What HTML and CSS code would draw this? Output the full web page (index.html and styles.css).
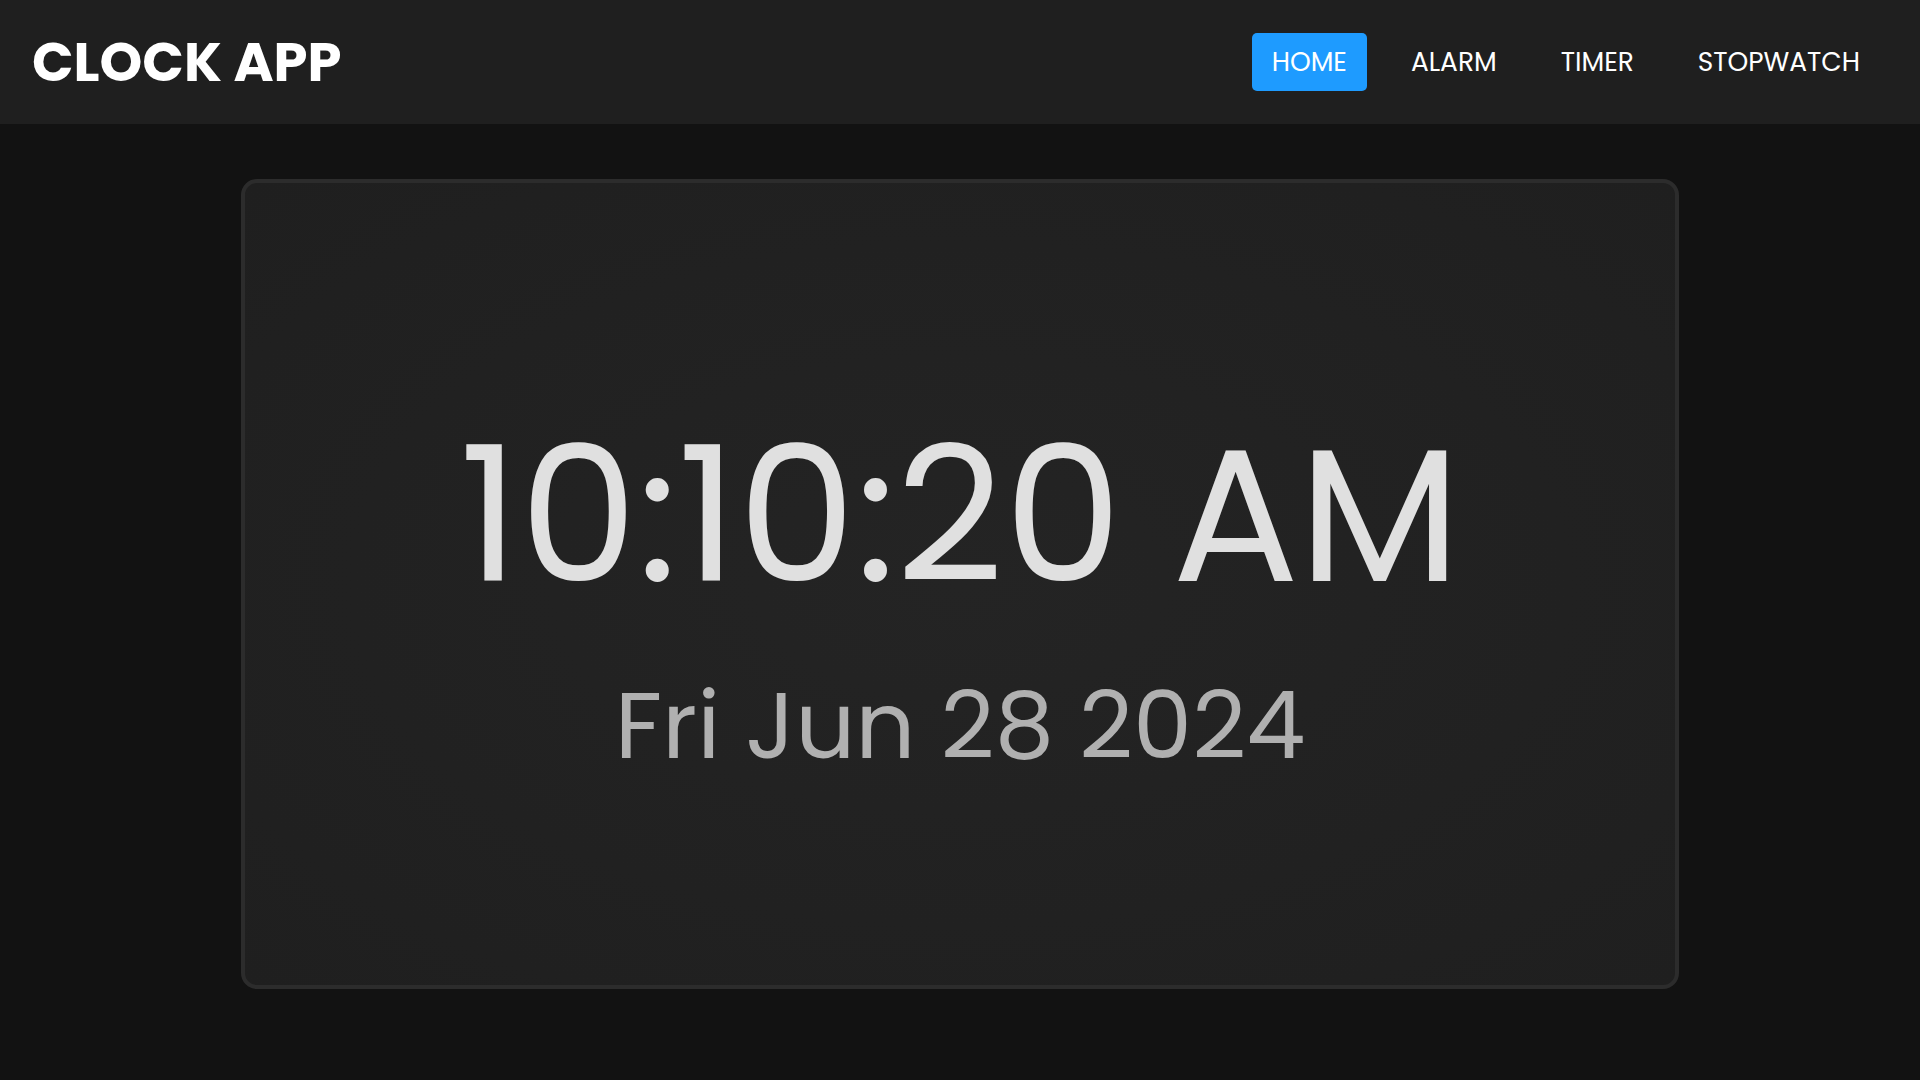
FILE: index.html
```html
<!DOCTYPE html>
<html lang="en">
<head>
<meta charset="utf-8">
<title>Clock App</title>
<link rel="stylesheet" href="styles.css">
</head>
<body>
<header class="topbar">
  <h1 class="brand">CLOCK APP</h1>
  <nav class="nav">
    <a class="nav-link active" href="#">HOME</a>
    <a class="nav-link" href="#">ALARM</a>
    <a class="nav-link" href="#">TIMER</a>
    <a class="nav-link" href="#">STOPWATCH</a>
  </nav>
</header>
<main class="main">
  <section class="clock-card">
    <div class="time">10:10:20 AM</div>
    <div class="date">Fri Jun 28 2024</div>
  </section>
</main>
</body>
</html>
```
FILE: styles.css
```css
* { box-sizing: border-box; }
html, body { margin: 0; padding: 0; }
body {
  background: #121212;
  color: #ffffff;
  font-family: "Poppins", "Inter", "Noto Sans", sans-serif;
  height: 1080px;
  overflow: hidden;
}
.topbar {
  height: 124px;
  background: #1f1f1f;
  display: flex;
  align-items: center;
  justify-content: space-between;
  padding: 0 40px 0 32px;
}
.brand {
  margin: 0;
  font-size: 54.5px;
  font-weight: 700;
  color: #ffffff;
}
.nav {
  display: flex;
  gap: 24px;
  align-items: center;
}
.nav-link {
  color: #ffffff;
  text-decoration: none;
  font-size: 26.4px;
  font-weight: 400;
  line-height: 40px;
  padding: 9px 20px;
  border-radius: 5px;
}
.nav-link.active {
  background: #1e9bff;
}
.main {
  display: flex;
  justify-content: center;
  padding-top: 55px;
}
.clock-card {
  width: 1438px;
  height: 810px;
  border: 4px solid #2c2c2c;
  border-radius: 16px;
  padding-top: 17px;
  background: radial-gradient(ellipse at center, #242424 0%, #1f1f1f 100%);
  display: flex;
  flex-direction: column;
  align-items: center;
  justify-content: center;
}
.time {
  font-size: 188px;
  font-weight: 400;
  color: #e0e0e0;
  line-height: 1.2;
}
.date {
  font-size: 94px;
  font-weight: 400;
  color: #b0b0b0;
  line-height: 1.2;
  margin-top: 41px;
}
```
